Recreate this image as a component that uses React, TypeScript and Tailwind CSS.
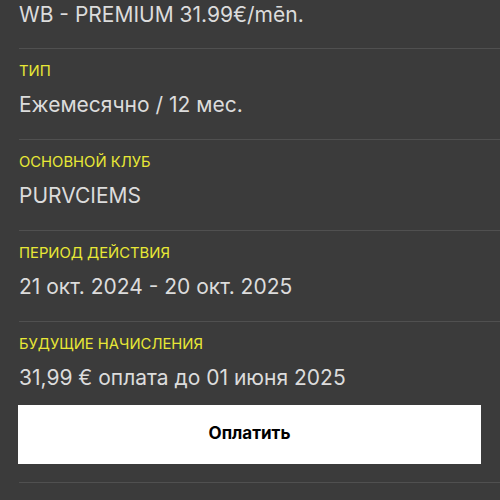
export default function App() {
  const rows = [
    { label: "Тип", value: "Ежемесячно / 12 мес." },
    { label: "Основной клуб", value: "PURVCIEMS" },
    { label: "Период действия", value: "21 окт. 2024 - 20 окт. 2025" },
  ];

  return (
    <div className="w-[500px] h-[500px] overflow-hidden bg-[#3b3b3b] font-['Inter',sans-serif]">
      <div className="ml-[19px] border-b border-[#505050] pt-[2px] pb-[20px]">
        <div className="text-[21px] leading-[26px] text-[#dcdcdc]">WB - PREMIUM 31.99€/mēn.</div>
      </div>

      {rows.map((r) => (
        <div key={r.label} className="ml-[19px] border-b border-[#505050] pt-[13px] pb-[21px]">
          <div className="text-[14.8px] leading-[18px] uppercase text-[#e8e836]">{r.label}</div>
          <div className="mt-[12px] text-[21px] leading-[26px] text-[#dcdcdc]">{r.value}</div>
        </div>
      ))}

      <div className="ml-[19px] border-b border-[#505050] pt-[13px] pb-[18px]">
        <div className="text-[14.8px] leading-[18px] uppercase text-[#e8e836]">Будущие начисления</div>
        <div className="mt-[12px] text-[21px] leading-[26px] text-[#dcdcdc]">31,99 € оплата до 01 июня 2025</div>
        <button className="mt-[14px] ml-[-1px] w-[463px] h-[59px] bg-white text-black text-[17px] font-bold pb-[2px]">
          Оплатить
        </button>
      </div>
    </div>
  );
}
